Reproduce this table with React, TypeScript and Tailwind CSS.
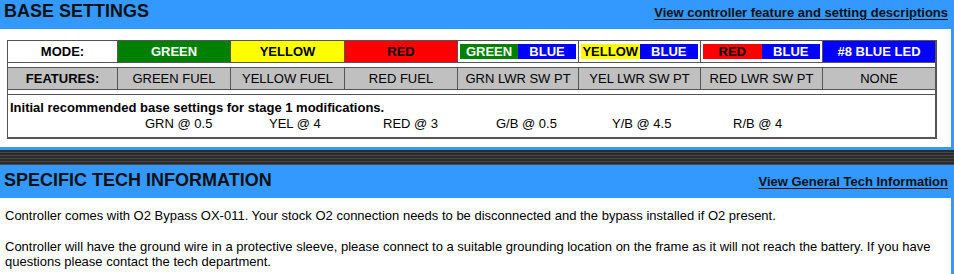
import type { ReactNode } from 'react';

type Swatch = { label: string; bg: string; text: string };

const MODES: (Swatch | [Swatch, Swatch])[] = [
  { label: 'GREEN', bg: 'bg-[#008000]', text: 'text-white' },
  { label: 'YELLOW', bg: 'bg-[#ffff00]', text: 'text-black' },
  { label: 'RED', bg: 'bg-[#ff0000]', text: 'text-black' },
  [
    { label: 'GREEN', bg: 'bg-[#008000]', text: 'text-white' },
    { label: 'BLUE', bg: 'bg-[#0000ff]', text: 'text-white' },
  ],
  [
    { label: 'YELLOW', bg: 'bg-[#ffff00]', text: 'text-black' },
    { label: 'BLUE', bg: 'bg-[#0000ff]', text: 'text-white' },
  ],
  [
    { label: 'RED', bg: 'bg-[#ff0000]', text: 'text-black' },
    { label: 'BLUE', bg: 'bg-[#0000ff]', text: 'text-white' },
  ],
  { label: '#8 BLUE LED', bg: 'bg-[#0000ff]', text: 'text-white' },
];

const FEATURES = [
  'GREEN FUEL',
  'YELLOW FUEL',
  'RED FUEL',
  'GRN LWR SW PT',
  'YEL LWR SW PT',
  'RED LWR SW PT',
  'NONE',
];

// starting settings, each with the width of its slot on the line
const PRESETS = [
  { label: 'GRN @ 0.5', w: 'w-[124px]' },
  { label: 'YEL @ 4', w: 'w-[114px]' },
  { label: 'RED @ 3', w: 'w-[113px]' },
  { label: 'G/B @ 0.5', w: 'w-[116px]' },
  { label: 'Y/B @ 4.5', w: 'w-[121px]' },
  { label: 'R/B @ 4', w: 'w-[100px]' },
];

const ROW = 'grid h-[21px] grid-cols-[109px_112px_113px_112px_120px_121px_121px_112px] gap-px';

function SectionHeader({ title, link, className }: { title: string; link: string; className: string }) {
  return (
    <div className={`flex items-start justify-between pl-[4px] pr-[6px] ${className}`}>
      <h2 className="text-[18px] font-bold leading-[21px] text-[#111]">{title}</h2>
      <a href="#" className="mt-[4px] text-[13px] font-bold leading-[15px] text-[#111] underline underline-offset-[2px]">
        {link}
      </a>
    </div>
  );
}

function Cell({ children, className }: { children: ReactNode; className: string }) {
  return (
    <div className={`flex items-center justify-center text-[13px] leading-[15px] ${className}`}>{children}</div>
  );
}

function ModeCell({ mode }: { mode: Swatch | [Swatch, Swatch] }) {
  if (Array.isArray(mode)) {
    return (
      <div className="flex bg-white px-[2px] py-[3px]">
        {mode.map((m) => (
          <Cell key={m.label} className={`flex-1 font-bold ${m.bg} ${m.text}`}>
            {m.label}
          </Cell>
        ))}
      </div>
    );
  }
  return <Cell className={`font-bold ${mode.bg} ${mode.text}`}>{mode.label}</Cell>;
}

export default function App() {
  return (
    <div className="min-h-screen bg-[#3399ff] font-['Liberation_Sans',Arial,sans-serif] text-black">
      <SectionHeader
        title="BASE SETTINGS"
        link="View controller feature and setting descriptions"
        className="h-[29px] pt-[1px]"
      />

      <div className="mr-[3px] bg-white pb-[8px] pl-[7px] pt-[11px]">
        <div className="flex w-fit flex-col gap-px border-b-2 border-l border-r-2 border-t border-[#555] bg-[#555]">
          <div className={ROW}>
            <Cell className="bg-white font-bold">MODE:</Cell>
            {MODES.map((m, i) => (
              <ModeCell key={i} mode={m} />
            ))}
          </div>
          <div className="h-[4px] bg-white" />
          <div className={ROW}>
            <Cell className="bg-[#c0c0c0] font-bold">FEATURES:</Cell>
            {FEATURES.map((f) => (
              <Cell key={f} className="bg-[#c0c0c0]">
                {f}
              </Cell>
            ))}
          </div>
          <div className="h-[4px] bg-white" />
          <div className="h-[42px] bg-white pl-[2px] pt-[5px] text-[13px] leading-[16px]">
            <div className="font-bold">Initial recommended base settings for stage 1 modifications.</div>
            <div className="flex pl-[135px]">
              {PRESETS.map((p) => (
                <span key={p.label} className={`shrink-0 ${p.w}`}>
                  {p.label}
                </span>
              ))}
            </div>
          </div>
        </div>
      </div>

      <div className="mt-[3px] h-[15px] bg-[repeating-linear-gradient(to_bottom,#2b2b2b_0px,#2b2b2b_2px,#474747_2px,#474747_3px)]" />

      <SectionHeader
        title="SPECIFIC TECH INFORMATION"
        link="View General Tech Information"
        className="h-[33px] pt-[5px]"
      />

      <div className="mr-[3px] bg-white pb-[10px] pl-[5px] pr-[6px] pt-[10px] text-[13px] leading-[15px]">
        <p>
          Controller comes with O2 Bypass OX-011. Your stock O2 connection needs to be disconnected and the bypass
          installed if O2 present.
        </p>
        <p className="mt-[16px]">
          Controller will have the ground wire in a protective sleeve, please connect to a suitable grounding location on
          the frame as it will not reach the battery. If you have questions please contact the tech department.
        </p>
      </div>
    </div>
  );
}
